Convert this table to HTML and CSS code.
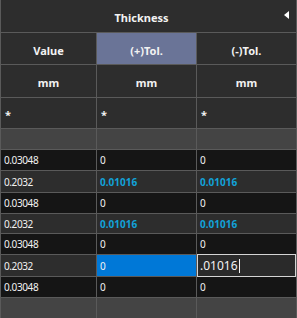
FILE: index.html
```html
<!DOCTYPE html>
<html>
<head>
<meta charset="utf-8">
<link rel="stylesheet" href="styles.css">
</head>
<body>
<div class="grid">
  <div class="cell title"><span>Thickness</span><span class="collapse"></span></div>

  <div class="cell head">Value</div>
  <div class="cell head sel">(+)Tol.</div>
  <div class="cell head">(-)Tol.</div>

  <div class="cell head">mm</div>
  <div class="cell head">mm</div>
  <div class="cell head">mm</div>

  <div class="cell star">*</div>
  <div class="cell star">*</div>
  <div class="cell star">*</div>

  <div class="cell blank"></div>
  <div class="cell blank"></div>
  <div class="cell blank"></div>

  <div class="cell d odd">0.03048</div>
  <div class="cell d odd">0</div>
  <div class="cell d odd">0</div>

  <div class="cell d even">0.2032</div>
  <div class="cell d even hl">0.01016</div>
  <div class="cell d even hl">0.01016</div>

  <div class="cell d odd">0.03048</div>
  <div class="cell d odd">0</div>
  <div class="cell d odd">0</div>

  <div class="cell d even">0.2032</div>
  <div class="cell d even hl">0.01016</div>
  <div class="cell d even hl">0.01016</div>

  <div class="cell d odd">0.03048</div>
  <div class="cell d odd">0</div>
  <div class="cell d odd">0</div>

  <div class="cell d even">0.2032</div>
  <div class="cell d selcell">0</div>
  <div class="cell d edit">.01016<span class="caret"></span></div>

  <div class="cell d odd">0.03048</div>
  <div class="cell d odd">0</div>
  <div class="cell d odd">0</div>

  <div class="cell blank"></div>
  <div class="cell blank"></div>
  <div class="cell blank"></div>
</div>
</body>
</html>
```
FILE: styles.css
```css
html, body {
  margin: 0;
  padding: 0;
  background: #2d2d2d;
}
body {
  width: 297px;
  height: 318px;
  overflow: hidden;
  font-family: "Noto Sans", "Open Sans", sans-serif;
  color: #f2f2f2;
}
.grid {
  display: grid;
  grid-template-columns: 95px 99px 99px;
  grid-template-rows: 32px 31px 32px 30px 20px 20px 21px 20px 19px 20px 21px 20px 20px;
  gap: 1px;
  padding: 0 1px;
  background: #5a5a5a;
  width: 297px;
  box-sizing: border-box;
}
.cell {
  background: #2d2d2d;
  display: flex;
  align-items: center;
  box-sizing: border-box;
  min-width: 0;
  white-space: nowrap;
}
.title {
  grid-column: 1 / 4;
  justify-content: center;
  position: relative;
  font-weight: 700;
  font-size: 11px;
  padding-right: 14px;
  padding-top: 2px;
}
.collapse {
  position: absolute;
  right: 7px;
  top: 11px;
  width: 0;
  height: 0;
  border-top: 4px solid transparent;
  border-bottom: 4px solid transparent;
  border-right: 5px solid #ffffff;
}
.head {
  justify-content: center;
  font-weight: 700;
  font-size: 11px;
  padding-top: 3px;
}
.head.sel {
  background: #6a7497;
}
.star {
  padding-left: 4px;
  font-size: 11px;
  font-weight: 700;
  padding-top: 2px;
}
.blank {
  background: #444444;
}
.d {
  padding-left: 3px;
  font-size: 10px;
  letter-spacing: -0.4px;
}
.odd {
  background: #151515;
}
.even {
  background: #2d2d2d;
}
.hl {
  color: #12a2d8;
  font-weight: 700;
  letter-spacing: 0;
}
.selcell {
  background: #0078d7;
}
.edit {
  background: #2a2a2a;
  position: relative;
  font-size: 12px;
  letter-spacing: 0;
}
.edit::after {
  content: "";
  position: absolute;
  left: 0;
  right: 0;
  top: -1px;
  bottom: -1px;
  border: 1px solid #d4d4d4;
}
.caret {
  display: inline-block;
  width: 1px;
  height: 14px;
  background: #f2f2f2;
  margin-left: 1px;
}
```
